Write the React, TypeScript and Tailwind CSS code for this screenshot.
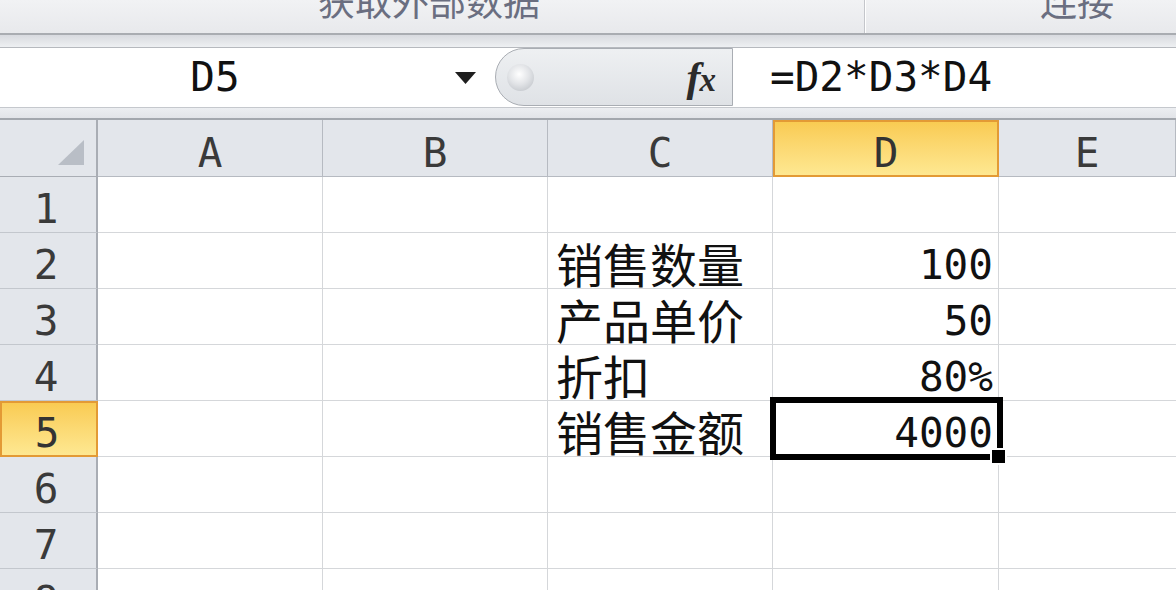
import React from "react";

const mono = "font-['DejaVu_Sans_Mono','Liberation_Mono',monospace]";
const cjk = "font-['Noto_Sans_CJK_SC','Noto_Sans',sans-serif]";

const columns = ["A", "B", "C", "D", "E"];

const rows: { n: number; c?: string; d?: string }[] = [
  { n: 1 },
  { n: 2, c: "销售数量", d: "100" },
  { n: 3, c: "产品单价", d: "50" },
  { n: 4, c: "折扣", d: "80%" },
  { n: 5, c: "销售金额", d: "4000" },
  { n: 6 },
  { n: 7 },
  { n: 8 },
];

function Ribbon() {
  return (
    <div className="flex h-[33px] overflow-hidden bg-linear-to-b from-[#f1f2f4] to-[#e8e9ec]">
      <div className="flex w-[865px] justify-center border-r border-[#c4c6cb] pr-[6px]">
        <span className={`${cjk} -mt-[18px] text-[37px] leading-none text-[#6a6e80]`}>获取外部数据</span>
      </div>
      <div className="flex flex-1 border-l border-white pl-[174px]">
        <span className={`${cjk} -mt-[18px] text-[37px] leading-none text-[#6a6e80]`}>连接</span>
      </div>
    </div>
  );
}

function FormulaBar() {
  return (
    <div className="flex h-[59px] bg-white">
      {/* name box */}
      <div className="flex w-[495px] items-center">
        <div className={`${mono} w-[430px] text-center text-[41px] leading-none text-[#111]`}>D5</div>
        <svg width="21" height="12" viewBox="0 0 21 12" className="ml-[25px] mt-[1px]">
          <polygon points="0,0 21,0 10.5,12" fill="#1e1e1e" />
        </svg>
      </div>

      {/* fx pill */}
      <div className="flex h-[58px] w-[238px] items-center rounded-l-full border-y-[1.5px] border-l-[1.5px] border-r border-[#a9adb3] bg-linear-to-b from-[#eef0f2] to-[#dfe2e6]">
        <div className="ml-[11px] h-[27px] w-[27px] rounded-full bg-[radial-gradient(circle_at_45%_38%,#ffffff_0%,#e2e4e7_45%,#b7bbc1_100%)]" />
        <div className="ml-auto mr-[16px] flex items-baseline font-['Liberation_Serif',serif] font-bold italic text-[#2b2b2b]">
          <span className="text-[42px] leading-none">f</span>
          <span className="-ml-[1px] text-[33px] leading-none">x</span>
        </div>
      </div>

      {/* formula */}
      <div className={`${mono} flex flex-1 items-center pl-[37px] text-[41px] leading-none text-[#111]`}>
        =D2*D3*D4
      </div>
    </div>
  );
}

function Sheet() {
  return (
    <div className="relative">
      <div className="grid grid-cols-[98px_225px_225px_225px_226px_1fr] grid-rows-[57px_repeat(8,56px)]">
        {/* corner */}
        <div className="flex items-end justify-end border-b border-r-2 border-[#a9adb4] bg-[#e3e6eb] pb-[11px] pr-[12px]">
          <svg width="26" height="25" viewBox="0 0 26 25">
            <polygon points="26,0 26,25 0,25" fill="#b9bec6" />
          </svg>
        </div>
        {columns.map((col) =>
          col === "D" ? (
            <div
              key={col}
              className={`${mono} flex items-end justify-center border-2 border-[#e39a35] bg-linear-to-b from-[#f9cb52] to-[#fee891] pb-[1px] text-[41px] leading-none text-[#333]`}
            >
              {col}
            </div>
          ) : (
            <div
              key={col}
              className={`${mono} flex items-end justify-center border-b border-r border-[#b6bac1] bg-[#e3e6eb] pb-[2px] text-[41px] leading-none text-[#3a3a3a]`}
            >
              {col}
            </div>
          )
        )}

        {rows.map((row) => (
          <React.Fragment key={row.n}>
            {row.n === 5 ? (
              <div
                className={`${mono} flex items-end justify-center border-2 border-[#e39a35] bg-linear-to-b from-[#f9cb52] to-[#fee891] pb-[1px] pr-[4px] text-[41px] leading-none text-[#333]`}
              >
                {row.n}
              </div>
            ) : (
              <div
                className={`${mono} flex items-end justify-center border-b border-r-2 border-b-[#c3c7cd] border-r-[#a9adb4] bg-[#e3e6eb] pb-[2px] pr-[4px] text-[41px] leading-none text-[#3a3a3a]`}
              >
                {row.n}
              </div>
            )}
            <div className="border-b border-r border-[#d5d7da] bg-white" />
            <div className="border-b border-r border-[#d5d7da] bg-white" />
            <div
              className={`${cjk} flex items-end border-b border-r border-[#d5d7da] bg-white pb-[2px] pl-[8px] text-[47px] leading-none text-[#111]`}
            >
              {row.c}
            </div>
            <div
              className={`${mono} flex items-end justify-end border-b border-r border-[#d5d7da] bg-white pb-[2px] pr-[5px] text-[41px] leading-none text-[#111]`}
            >
              {row.d}
            </div>
            <div className="border-b border-[#d5d7da] bg-white" />
          </React.Fragment>
        ))}
      </div>

      {/* active cell D5 */}
      <div className="absolute left-[770px] top-[277px] h-[63px] w-[233px] border-[6px] border-black" />
      <div className="absolute left-[990px] top-[328px] h-[17px] w-[17px] border-2 border-white bg-black" />
    </div>
  );
}

export default function App() {
  return (
    <div className="h-[590px] w-[1176px] overflow-hidden bg-white">
      <Ribbon />
      <div className="h-[2px] bg-[#a9acb1]" />
      <div className="h-[12px] bg-linear-to-b from-[#d8dadf] to-[#eef0f2]" />
      <div className="h-px bg-[#b6b9be]" />
      <FormulaBar />
      <div className="h-px bg-[#c5c8cd]" />
      <div className="h-[10px] bg-linear-to-b from-[#eceef1] to-[#e2e4e8]" />
      <div className="h-[2px] bg-[#a3a7ad]" />
      <Sheet />
    </div>
  );
}
